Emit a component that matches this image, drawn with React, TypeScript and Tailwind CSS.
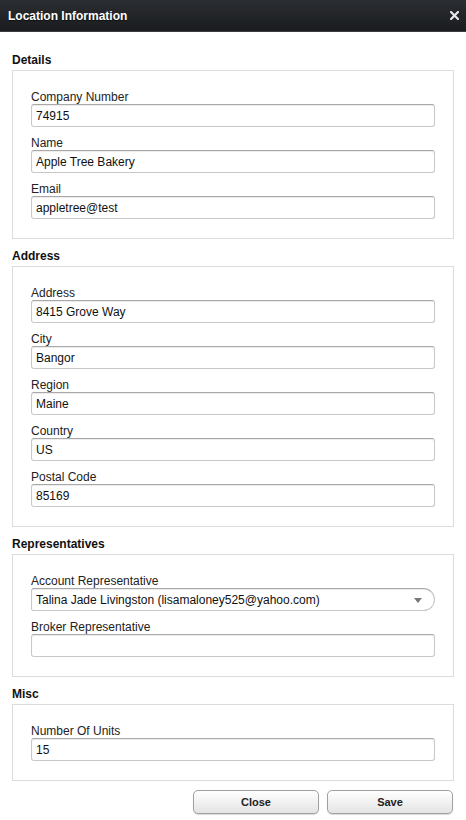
import React from 'react'

const font = { fontFamily: '"Liberation Sans", Arial, sans-serif' }

interface FieldProps {
  label: string
  value?: string
  select?: boolean
}

const Field: React.FC<FieldProps> = ({ label, value = '', select }) => {
  return (
    <div className="flex flex-col">
      <label className="text-[12px] leading-[14px] h-[14px] text-[#222]">{label}</label>
      {select ? (
        <div className="relative h-[23px] border border-[#c8c8c8] border-t-[#a8a8a8] rounded-l-[3px] rounded-r-[12px] bg-white flex items-center pl-[4px] pr-[24px] shadow-[inset_0_1px_1px_rgba(0,0,0,0.08)]">
          <span className="text-[12px] text-[#111] truncate">{value}</span>
          <svg className="absolute right-[12px] top-[9px]" width="8" height="5" viewBox="0 0 8 5">
            <path d="M0 0h8L4 5z" fill="#777" />
          </svg>
        </div>
      ) : (
        <input
          readOnly
          value={value}
          className="h-[23px] w-full border border-[#c8c8c8] border-t-[#a8a8a8] rounded-[3px] bg-white pl-[4px] text-[12px] text-[#111] outline-none shadow-[inset_0_1px_1px_rgba(0,0,0,0.08)]"
          style={font}
        />
      )}
    </div>
  )
}

const Section: React.FC<{ title: string; first?: boolean; children: React.ReactNode }> = ({
  title,
  first,
  children,
}) => (
  <div className={first ? 'pt-[20px]' : 'pt-[9px]'}>
    <h3 className="text-[12px] leading-[14px] font-bold text-[#111] mt-[1px] mb-[3px]">{title}</h3>
    <div className="border border-[#dcdcdc] px-[18px] py-[19px] flex flex-col gap-[9px]">{children}</div>
  </div>
)

export default function App() {
  return (
    <div className="w-[466px] h-[820px] bg-white overflow-hidden" style={font}>
      <div className="h-[32px] bg-gradient-to-b from-[#2b2e32] to-[#1a1c1f] border-b border-[#3a3d41] flex items-center justify-between pl-[8px] pr-[7px]">
        <span className="text-white font-bold text-[12px] [text-shadow:0_1px_1px_rgba(0,0,0,0.6)]">
          Location Information
        </span>
        <svg width="9" height="9" viewBox="0 0 9 9">
          <path d="M1 1L8 8M8 1L1 8" stroke="#e8e8e8" strokeWidth="2.2" strokeLinecap="square" />
        </svg>
      </div>

      <div className="px-[12px]">
        <Section title="Details" first>
          <Field label="Company Number" value="74915" />
          <Field label="Name" value="Apple Tree Bakery" />
          <Field label="Email" value="appletree@test" />
        </Section>

        <Section title="Address">
          <Field label="Address" value="8415 Grove Way" />
          <Field label="City" value="Bangor" />
          <Field label="Region" value="Maine" />
          <Field label="Country" value="US" />
          <Field label="Postal Code" value="85169" />
        </Section>

        <Section title="Representatives">
          <Field label="Account Representative" value="Talina Jade Livingston (lisamaloney525@yahoo.com)" select />
          <Field label="Broker Representative" />
        </Section>

        <Section title="Misc">
          <Field label="Number Of Units" value="15" />
        </Section>

        <div className="flex justify-end gap-[8px] mt-[9px] pr-[1px]">
          {['Close', 'Save'].map((b) => (
            <button
              key={b}
              type="button"
              className="w-[126px] h-[24px] rounded-[5px] border border-[#a0a0a0] bg-gradient-to-b from-white to-[#e4e4e4] text-[11px] font-bold text-[#222] shadow-[0_1px_1px_rgba(0,0,0,0.15)]"
              style={font}
            >
              {b}
            </button>
          ))}
        </div>
      </div>
    </div>
  )
}
